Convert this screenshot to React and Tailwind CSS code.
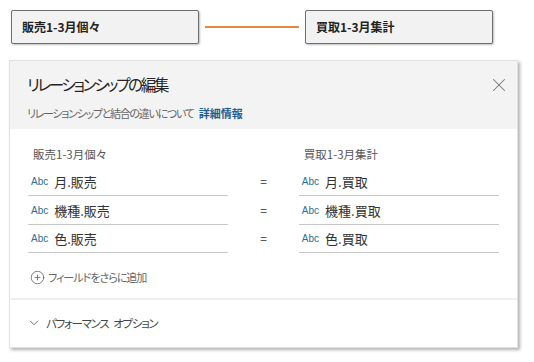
import { X, ChevronDown, CirclePlus } from 'lucide-react';

const jp = "font-['Segoe_UI','Noto_Sans_CJK_JP',sans-serif] [font-feature-settings:'palt']";

const rows = [
  { left: '月.販売', right: '月.買取' },
  { left: '機種.販売', right: '機種.買取' },
  { left: '色.販売', right: '色.買取' },
];

function Field({ text }) {
  return (
    <div className="h-[28.5px] flex items-end border-b border-[#c8c8c8] pb-[4px]">
      <span className="text-[10px] text-[#2d6f93] font-['Liberation_Sans',sans-serif] ml-[3px] mr-[6px] mb-[2px]">Abc</span>
      <span className="text-[13px] text-[#333] leading-[18px]">{text}</span>
    </div>
  );
}

export default function App() {
  return (
    <div className={`w-[534px] h-[362px] bg-white overflow-hidden ${jp}`}>
      {/* Table cards */}
      <div className="flex items-center pt-[10px] pl-[11px]">
        <div className="w-[188px] h-[34px] bg-[#f2f2f2] border-[1.5px] border-[#6e6e6e] rounded-[2px] shadow-[1px_1px_2px_rgba(0,0,0,0.25)] flex items-center pl-[10px] text-[12px] font-bold text-[#222]">
          販売1-3月個々
        </div>
        <div className="w-[94px] mx-[6px] h-[2px] bg-[#e8883a]" />
        <div className="w-[188px] h-[34px] bg-[#f2f2f2] border-[1.5px] border-[#6e6e6e] rounded-[2px] shadow-[1px_1px_2px_rgba(0,0,0,0.25)] flex items-center pl-[10px] text-[12px] font-bold text-[#222]">
          買取1-3月集計
        </div>
      </div>

      {/* Edit relationship panel */}
      <div className="ml-[9px] mt-[16px] w-[509px] h-[288px] bg-white border border-[#e2e2e2] shadow-[2px_2px_3px_rgba(0,0,0,0.3)] flex flex-col">
        <div className="h-[69px] bg-[#f3f3f3] px-[17px] flex flex-col">
          <div className="flex items-center justify-between h-[44px] pt-[4px]">
            <span className="text-[15.5px] tracking-[-2.3px] text-[#252525]">リレーションシップの編集</span>
            <X className="w-[22px] h-[22px] text-[#777] mr-[-10px]" strokeWidth={1.1} />
          </div>
          <div className="text-[11px] tracking-[-1.3px] text-[#666]">
            リレーションシップと結合の違いについて <span className="font-bold text-[#1f5f94] ml-[4px] tracking-[0px]">詳細情報</span>
          </div>
        </div>

        <div className="px-[18px] pt-[17px]">
          <div className="flex">
            <div className="w-[201px]">
              <div className="text-[11.5px] text-[#555] pl-[5px] leading-[16px] mb-[6px]">販売1-3月個々</div>
              {rows.map((r) => (
                <Field key={r.left} text={r.left} />
              ))}
            </div>
            <div className="w-[71px] pt-[22px] flex flex-col">
              {rows.map((r) => (
                <div key={r.left} className="h-[28.5px] flex items-end justify-center pb-[6px] text-[12px] text-[#333]">=</div>
              ))}
            </div>
            <div className="w-[201px]">
              <div className="text-[11.5px] text-[#555] pl-[5px] leading-[16px] mb-[6px]">買取1-3月集計</div>
              {rows.map((r) => (
                <Field key={r.right} text={r.right} />
              ))}
            </div>
          </div>
          <div className="flex items-center mt-[16px] ml-[2px] text-[11px] tracking-[-1px] text-[#666]">
            <CirclePlus className="w-[15px] h-[15px] text-[#555] mr-[3px]" strokeWidth={1.2} />
            フィールドをさらに追加
          </div>
        </div>

        <div className="mt-[12px] border-t-2 border-[#efefef] flex items-center h-[50px] pl-[17px] text-[11.5px] tracking-[-1.3px] text-[#444]">
          <ChevronDown className="w-[14px] h-[14px] text-[#555] mr-[5px]" strokeWidth={1.4} />
          <span>パフォーマンス</span>
          <span className="ml-[5px]">オプション</span>
        </div>
      </div>
    </div>
  );
}
